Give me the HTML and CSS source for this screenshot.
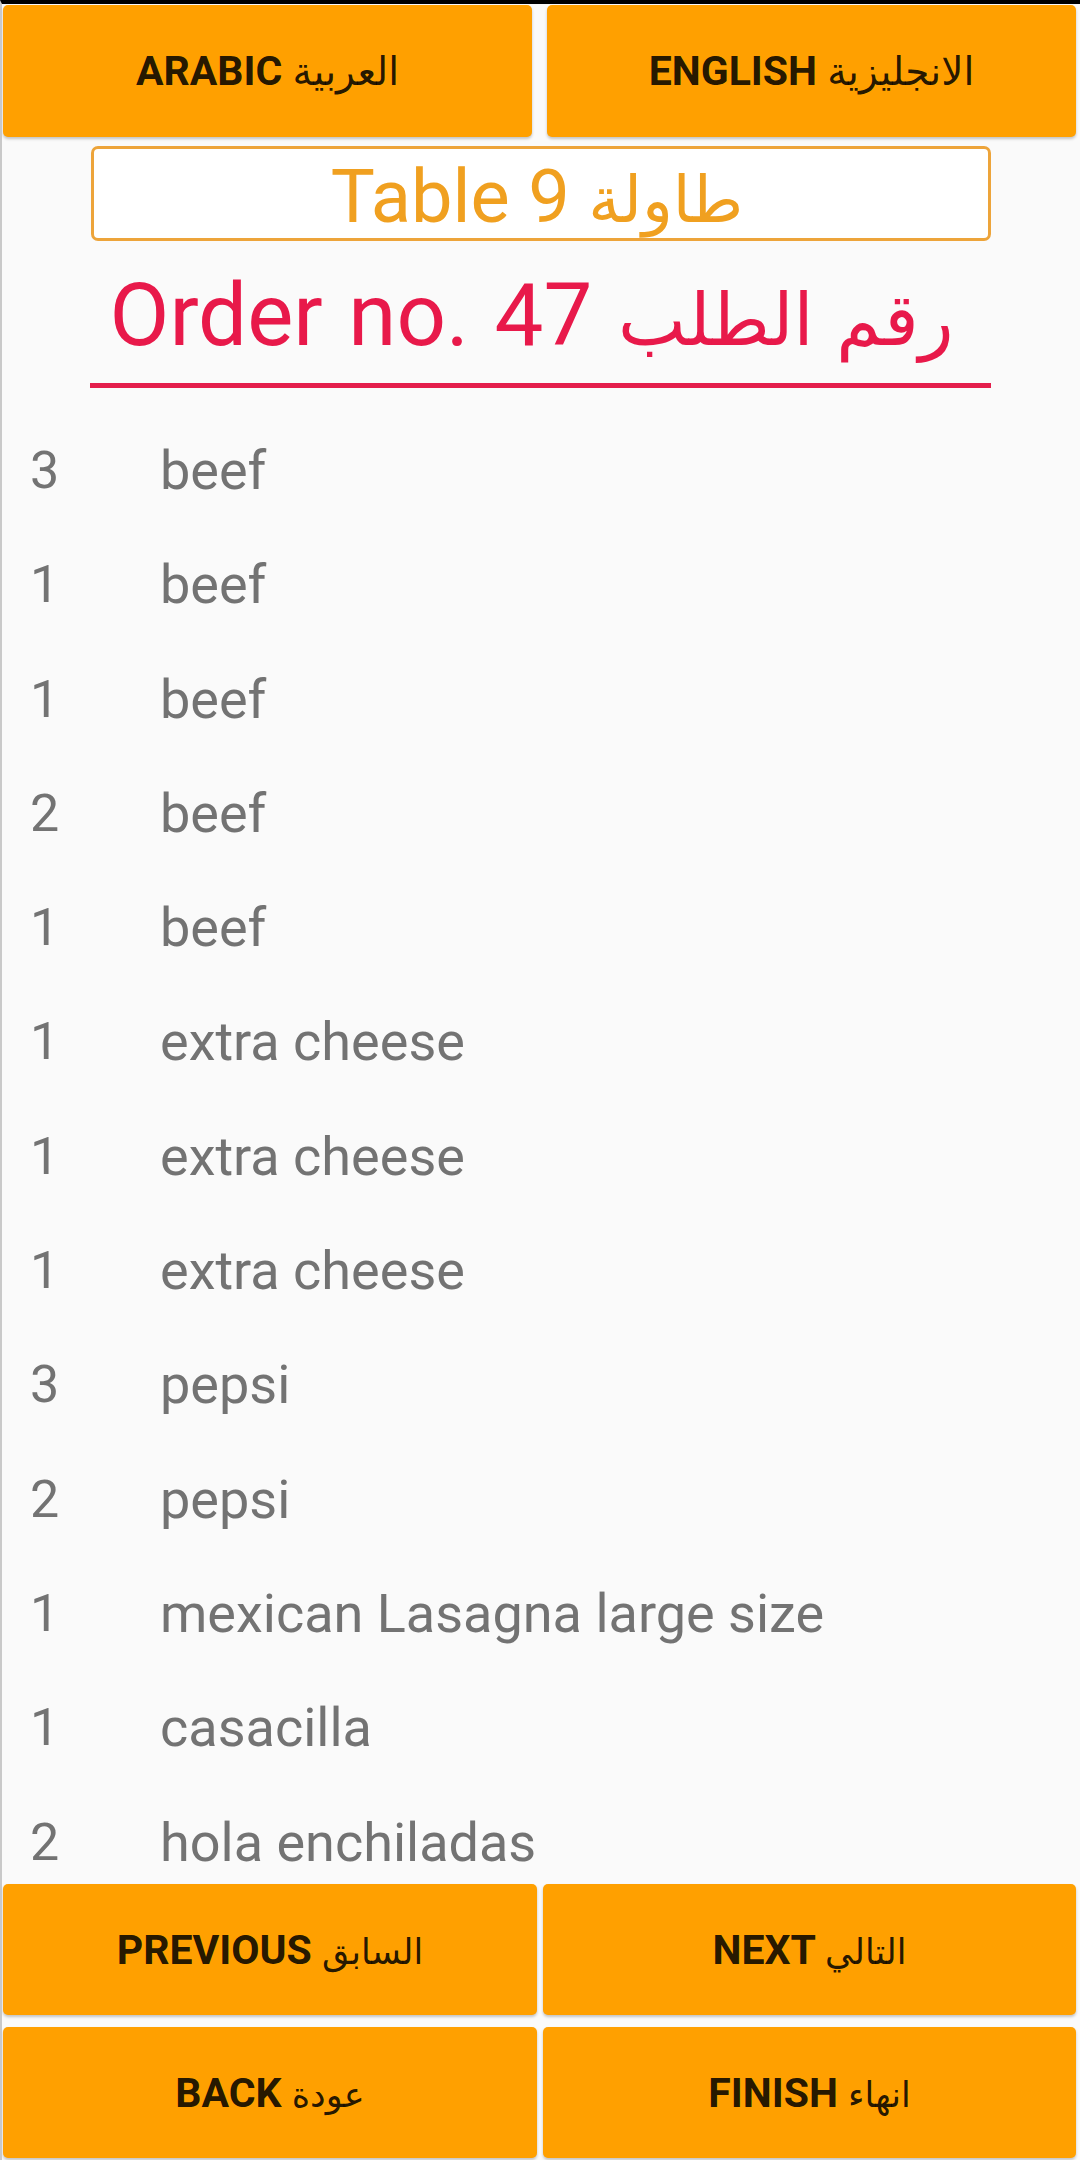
FILE: index.html
```html
<!DOCTYPE html>
<html lang="en">
<head>
<meta charset="utf-8">
<title>Order</title>
<link rel="stylesheet" href="styles.css">
</head>
<body>
<div class="app">
  <div class="lang-row">
    <button class="btn">ARABIC <span class="ar ar-lg">العربية</span></button>
    <button class="btn">ENGLISH <span class="ar ar-lg">الانجليزية</span></button>
  </div>
  <div class="table-box">Table 9 <span class="ar">طاولة</span></div>
  <div class="order-title">Order no. 47 <span class="ar">رقم الطلب</span></div>
  <div class="list">
    <div class="row"><span class="qty">3</span><span class="name">beef</span></div>
    <div class="row"><span class="qty">1</span><span class="name">beef</span></div>
    <div class="row"><span class="qty">1</span><span class="name">beef</span></div>
    <div class="row"><span class="qty">2</span><span class="name">beef</span></div>
    <div class="row"><span class="qty">1</span><span class="name">beef</span></div>
    <div class="row"><span class="qty">1</span><span class="name">extra cheese</span></div>
    <div class="row"><span class="qty">1</span><span class="name">extra cheese</span></div>
    <div class="row"><span class="qty">1</span><span class="name">extra cheese</span></div>
    <div class="row"><span class="qty">3</span><span class="name">pepsi</span></div>
    <div class="row"><span class="qty">2</span><span class="name">pepsi</span></div>
    <div class="row"><span class="qty">1</span><span class="name">mexican Lasagna large size</span></div>
    <div class="row"><span class="qty">1</span><span class="name">casacilla</span></div>
    <div class="row"><span class="qty">2</span><span class="name">hola enchiladas</span></div>
  </div>
  <div class="nav-grid">
    <button class="btn">PREVIOUS <span class="ar">السابق</span></button>
    <button class="btn">NEXT <span class="ar">التالي</span></button>
    <button class="btn">BACK <span class="ar">عودة</span></button>
    <button class="btn">FINISH <span class="ar">انهاء</span></button>
  </div>
</div>
</body>
</html>
```
FILE: styles.css
```css
* { box-sizing: border-box; }
html, body { margin: 0; padding: 0; }
body {
  background: #fafafa;
  font-family: Roboto, "DejaVu Sans", sans-serif;
}
.app {
  width: 1080px;
  height: 2160px;
  display: flex;
  flex-direction: column;
  border-top: 4px solid #000;
  border-left: 2px solid #c9c9c9;
  background: #fafafa;
  overflow: hidden;
}
.btn {
  background: #ffa000;
  border: none;
  border-radius: 5px;
  color: rgba(0, 0, 0, 0.87);
  font-family: Roboto, "DejaVu Sans", sans-serif;
  font-weight: bold;
  font-size: 41px;
  box-shadow: 0 2px 3px rgba(0, 0, 0, 0.22);
  padding: 0;
  margin: 0;
  white-space: nowrap;
}
.btn .ar {
  font-weight: normal;
  font-family: "DejaVu Sans", sans-serif;
  font-size: 35px;
}
.btn .ar-lg {
  font-size: 39px;
}
.lang-row {
  display: grid;
  grid-template-columns: 529px 529px;
  column-gap: 15px;
  padding: 1px 4px 0 1px;
  height: 133px;
}
.lang-row .btn { height: 132px; }
.table-box {
  margin: 9px 89px 0 89px;
  height: 95px;
  border: 3px solid #eda43a;
  border-radius: 7px;
  background: #fff;
  color: #f0a020;
  font-size: 74px;
  line-height: 83px;
  padding: 6px 8px 0 0;
  text-align: center;
  white-space: nowrap;
}
.table-box .ar {
  font-family: "DejaVu Sans", sans-serif;
  font-size: 64px;
}
.order-title {
  margin: 0 89px 0 88px;
  padding: 14px 18px 8px 0;
  line-height: 120px;
  height: 147px;
  font-size: 87px;
  color: #e8194a;
  text-align: center;
  border-bottom: 5px solid #e41e4c;
  white-space: nowrap;
  word-spacing: 4px;
}
.order-title .ar {
  font-family: "DejaVu Sans", sans-serif;
  font-size: 72px;
  word-spacing: 0;
}
.list {
  flex: 1;
  min-height: 0;
  overflow: hidden;
  padding: 26px 0 0 28px;
}
.row {
  display: flex;
  height: 114.3px;
  line-height: 114.3px;
  font-size: 52px;
  color: #737373;
  white-space: nowrap;
}
.qty { width: 130px; flex: none; }
.name { flex: 1; font-size: 54px; }
.nav-grid {
  display: grid;
  grid-template-columns: 534px 533px;
  grid-template-rows: 131px 131px;
  column-gap: 6px;
  row-gap: 12px;
  padding: 2px 4px 2px 1px;
  height: 278px;
  flex: none;
}
```
